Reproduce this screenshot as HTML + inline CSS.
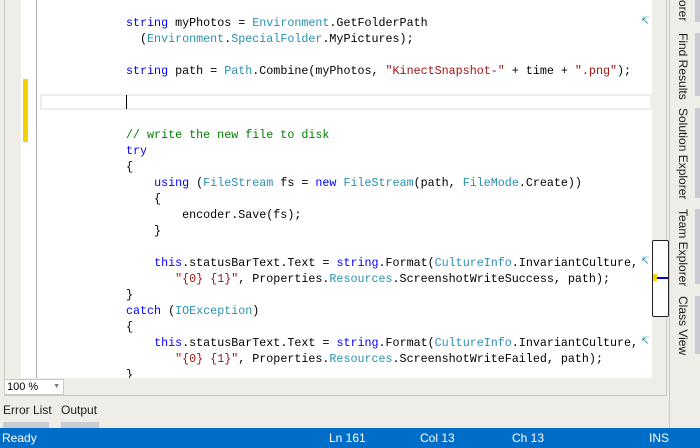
<!DOCTYPE html>
<html><head><style>
*{margin:0;padding:0;box-sizing:border-box}
body{width:700px;height:448px;overflow:hidden;background:#eeede8;position:relative;font-family:"Liberation Sans",sans-serif}
#ed{position:absolute;left:4px;top:0;width:663px;height:396px;border:1px solid #c8c8c8;border-top:none;background:#eeede8}
#code{position:absolute;left:21px;top:0;width:631px;height:378px;background:#fff;overflow:hidden}
#marg{position:absolute;left:36px;top:0;width:1px;height:378px;background:#b0b0b0}
pre{position:absolute;left:126px;top:15px;font-family:"Liberation Mono",monospace;font-size:11.7px;line-height:16px;color:#000;height:363px;overflow:hidden}
.k{color:#0000ff}.t{color:#2b91af}.s{color:#a31515}.c{color:#008000}
.w{color:#2b91af;position:absolute;left:641px;font-size:10px}
</style></head><body>
<div id="ed"></div>
<div id="code"></div>
<div style="position:absolute;left:40px;top:94px;width:612px;height:16px;border:2px solid #eeede8"></div>
<div style="position:absolute;left:126px;top:95px;width:1px;height:14px;background:#000"></div>
<div id="marg"></div>
<div style="position:absolute;left:23px;top:79px;width:5px;height:63px;background:#f2d200"></div>
<pre><span class="k">string</span> myPhotos = <span class="t">Environment</span>.GetFolderPath
  (<span class="t">Environment</span>.<span class="t">SpecialFolder</span>.MyPictures);

<span class="k">string</span> path = <span class="t">Path</span>.Combine(myPhotos, <span class="s">"KinectSnapshot-"</span> + time + <span class="s">".png"</span>);



<span class="c">// write the new file to disk</span>
<span class="k">try</span>
{
    <span class="k">using</span> (<span class="t">FileStream</span> fs = <span class="k">new</span> <span class="t">FileStream</span>(path, <span class="t">FileMode</span>.Create))
    {
        encoder.Save(fs);
    }

    <span class="k">this</span>.statusBarText.Text = <span class="k">string</span>.Format(<span class="t">CultureInfo</span>.InvariantCulture,
       <span class="s">"{0} {1}"</span>, Properties.<span class="t">Resources</span>.ScreenshotWriteSuccess, path);
}
<span class="k">catch</span> (<span class="t">IOException</span>)
{
    <span class="k">this</span>.statusBarText.Text = <span class="k">string</span>.Format(<span class="t">CultureInfo</span>.InvariantCulture,
       <span class="s">"{0} {1}"</span>, Properties.<span class="t">Resources</span>.ScreenshotWriteFailed, path);
}</pre>
<span class="w" style="top:16px">&#8632;</span>
<span class="w" style="top:256px">&#8632;</span>
<span class="w" style="top:336px">&#8632;</span>
<div style="position:absolute;left:652px;top:240px;width:17px;height:77px;border:1px solid #222;border-radius:2px;background:#fff"></div>
<div style="position:absolute;left:653px;top:277px;width:15px;height:2px;background:#0000e0"></div>
<div style="position:absolute;left:653px;top:274px;width:4px;height:7px;background:#f2d200"></div>
<div style="position:absolute;left:669px;top:0;width:1px;height:428px;background:#c8c8c8"></div>
<div style="position:absolute;left:695px;top:0;width:5px;height:22px;background:#c9cad4"></div>
<div style="position:absolute;left:695px;top:33px;width:5px;height:63px;background:#c9cad4"></div>
<div style="position:absolute;left:695px;top:108px;width:5px;height:90px;background:#c9cad4"></div>
<div style="position:absolute;left:695px;top:209px;width:5px;height:75px;background:#c9cad4"></div>
<div style="position:absolute;left:695px;top:296px;width:5px;height:58px;background:#c9cad4"></div>
<div style="position:absolute;left:676px;top:0;width:20px;height:360px;font-size:12px;color:#1e1e1e">
<div style="position:absolute;left:0;top:0;writing-mode:vertical-rl;">orer</div>
<div style="position:absolute;left:0;top:33px;writing-mode:vertical-rl;">Find Results</div>
<div style="position:absolute;left:0;top:108px;writing-mode:vertical-rl;">Solution Explorer</div>
<div style="position:absolute;left:0;top:209px;writing-mode:vertical-rl;">Team Explorer</div>
<div style="position:absolute;left:0;top:296px;writing-mode:vertical-rl;">Class View</div>
</div>
<div style="position:absolute;left:4px;top:379px;width:60px;height:16px;background:#fff;border:1px solid #c8c8c8;font-size:11px;line-height:14px;padding-left:2px">100 %<span style="position:absolute;right:3px;top:0;font-size:7px;color:#777">&#9660;</span></div>
<div style="position:absolute;left:3px;top:403px;font-size:12px;color:#1e1e1e">Error List</div>
<div style="position:absolute;left:61px;top:403px;font-size:12px;color:#1e1e1e">Output</div>
<div style="position:absolute;left:3px;top:422px;width:46px;height:6px;background:#c9cad4"></div>
<div style="position:absolute;left:61px;top:422px;width:38px;height:6px;background:#c9cad4"></div>
<div style="position:absolute;left:0;top:428px;width:700px;height:20px;background:#006ec8;color:#fff;font-size:12px;line-height:20px">
<span style="position:absolute;left:2px">Ready</span>
<span style="position:absolute;left:329px">Ln 161</span>
<span style="position:absolute;left:420px">Col 13</span>
<span style="position:absolute;left:512px">Ch 13</span>
<span style="position:absolute;left:649px">INS</span>
</div>
</body></html>
